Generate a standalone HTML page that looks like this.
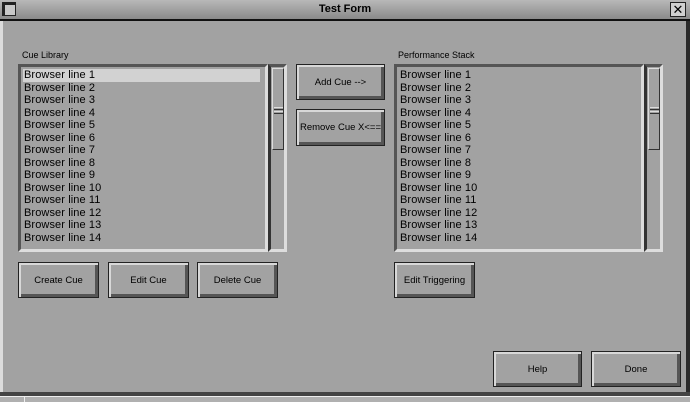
<!DOCTYPE html>
<html><head><style>
*{margin:0;padding:0;box-sizing:border-box}
body{width:690px;height:402px;background:#a2a2a2;position:relative;overflow:hidden;font-family:"Liberation Sans",sans-serif;color:#000}
.abs{position:absolute}
.title{left:0;top:0;width:690px;height:19px;background:linear-gradient(#b8b8b8,#8a8a8a);text-align:center;font-size:11px;font-weight:bold;line-height:19px}
.btn{position:absolute;background:#a2a2a2;border:1px solid #222;box-shadow:inset 2px 2px 0 #d8d8d8,inset -3px -3px 0 #555;font-size:9.5px;text-align:center;display:flex;align-items:center;justify-content:center}
.list{position:absolute;border:3px solid;border-color:#555 #ddd #ddd #555;background:#a2a2a2}
.row{height:12.5px;font-size:11px;line-height:12.5px;padding-left:1px;letter-spacing:0.1px}
.sb{position:absolute;border:3px solid;border-color:#555 #ddd #ddd #333;background:#a2a2a2}
.thumb{position:absolute;left:1px;top:1px;width:12px;height:82px;border:1px solid;border-color:#ddd #333 #333 #ddd;background:#a2a2a2}
.grip{position:absolute;left:1px;width:9px;height:1px}
.lbl{position:absolute;font-size:9px}
</style></head><body>
<div class="abs title">Test Form</div>
<div class="abs" style="left:2px;top:2px;width:14px;height:14px;border:1px solid #222;background:#c8c8c8;box-shadow:inset 2px 2px 0 #222"></div>
<div class="abs" style="left:670px;top:2px;width:16px;height:15px;border:1px solid #222;background:#d0d0d0;font-size:13px;line-height:13px;text-align:center">✕</div>
<div class="abs" style="left:0;top:19px;width:690px;height:2px;background:#111"></div>
<div class="abs" style="left:0;top:21px;width:3px;height:374px;background:#dcdcdc"></div>
<div class="abs" style="left:686px;top:21px;width:4px;height:374px;background:#2a2a2a"></div>
<div class="abs" style="left:0;top:392px;width:690px;height:4px;background:#444"></div>
<div class="abs" style="left:0;top:396px;width:690px;height:6px;background:#b0b0b0;border-top:1px solid #eee"></div>
<div class="abs" style="left:24px;top:396px;width:1px;height:6px;background:#eee"></div>

<div class="lbl" style="left:22px;top:50px">Cue Library</div>
<div class="lbl" style="left:398px;top:50px">Performance Stack</div>

<div class="list" style="left:18px;top:64px;width:250px;height:188px;padding:2px">
<div class="row" style="background:#d2d2d2;margin-right:3px">Browser line 1</div>
<div class="row">Browser line 2</div><div class="row">Browser line 3</div><div class="row">Browser line 4</div><div class="row">Browser line 5</div><div class="row">Browser line 6</div><div class="row">Browser line 7</div><div class="row">Browser line 8</div><div class="row">Browser line 9</div><div class="row">Browser line 10</div><div class="row">Browser line 11</div><div class="row">Browser line 12</div><div class="row">Browser line 13</div><div class="row">Browser line 14</div>
</div>
<div class="sb" style="left:268px;top:64px;width:19px;height:188px"><div class="thumb"><div class="grip" style="top:38px;background:#ddd"></div><div class="grip" style="top:40px;background:#333"></div><div class="grip" style="top:42px;background:#ddd"></div><div class="grip" style="top:44px;background:#333"></div></div></div>

<div class="list" style="left:394px;top:64px;width:250px;height:188px;padding:2px">
<div class="row">Browser line 1</div>
<div class="row">Browser line 2</div><div class="row">Browser line 3</div><div class="row">Browser line 4</div><div class="row">Browser line 5</div><div class="row">Browser line 6</div><div class="row">Browser line 7</div><div class="row">Browser line 8</div><div class="row">Browser line 9</div><div class="row">Browser line 10</div><div class="row">Browser line 11</div><div class="row">Browser line 12</div><div class="row">Browser line 13</div><div class="row">Browser line 14</div>
</div>
<div class="sb" style="left:644px;top:64px;width:19px;height:188px"><div class="thumb"><div class="grip" style="top:38px;background:#ddd"></div><div class="grip" style="top:40px;background:#333"></div><div class="grip" style="top:42px;background:#ddd"></div><div class="grip" style="top:44px;background:#333"></div></div></div>

<div class="btn" style="left:296px;top:64px;width:89px;height:36px">Add Cue --&gt;</div>
<div class="btn" style="left:296px;top:109px;width:89px;height:37px">Remove Cue  X&lt;==</div>
<div class="btn" style="left:18px;top:262px;width:81px;height:36px">Create Cue</div>
<div class="btn" style="left:108px;top:262px;width:81px;height:36px">Edit Cue</div>
<div class="btn" style="left:197px;top:262px;width:81px;height:36px">Delete Cue</div>
<div class="btn" style="left:394px;top:262px;width:81px;height:36px">Edit Triggering</div>
<div class="btn" style="left:493px;top:351px;width:89px;height:36px">Help</div>
<div class="btn" style="left:591px;top:351px;width:90px;height:36px">Done</div>
</body></html>
